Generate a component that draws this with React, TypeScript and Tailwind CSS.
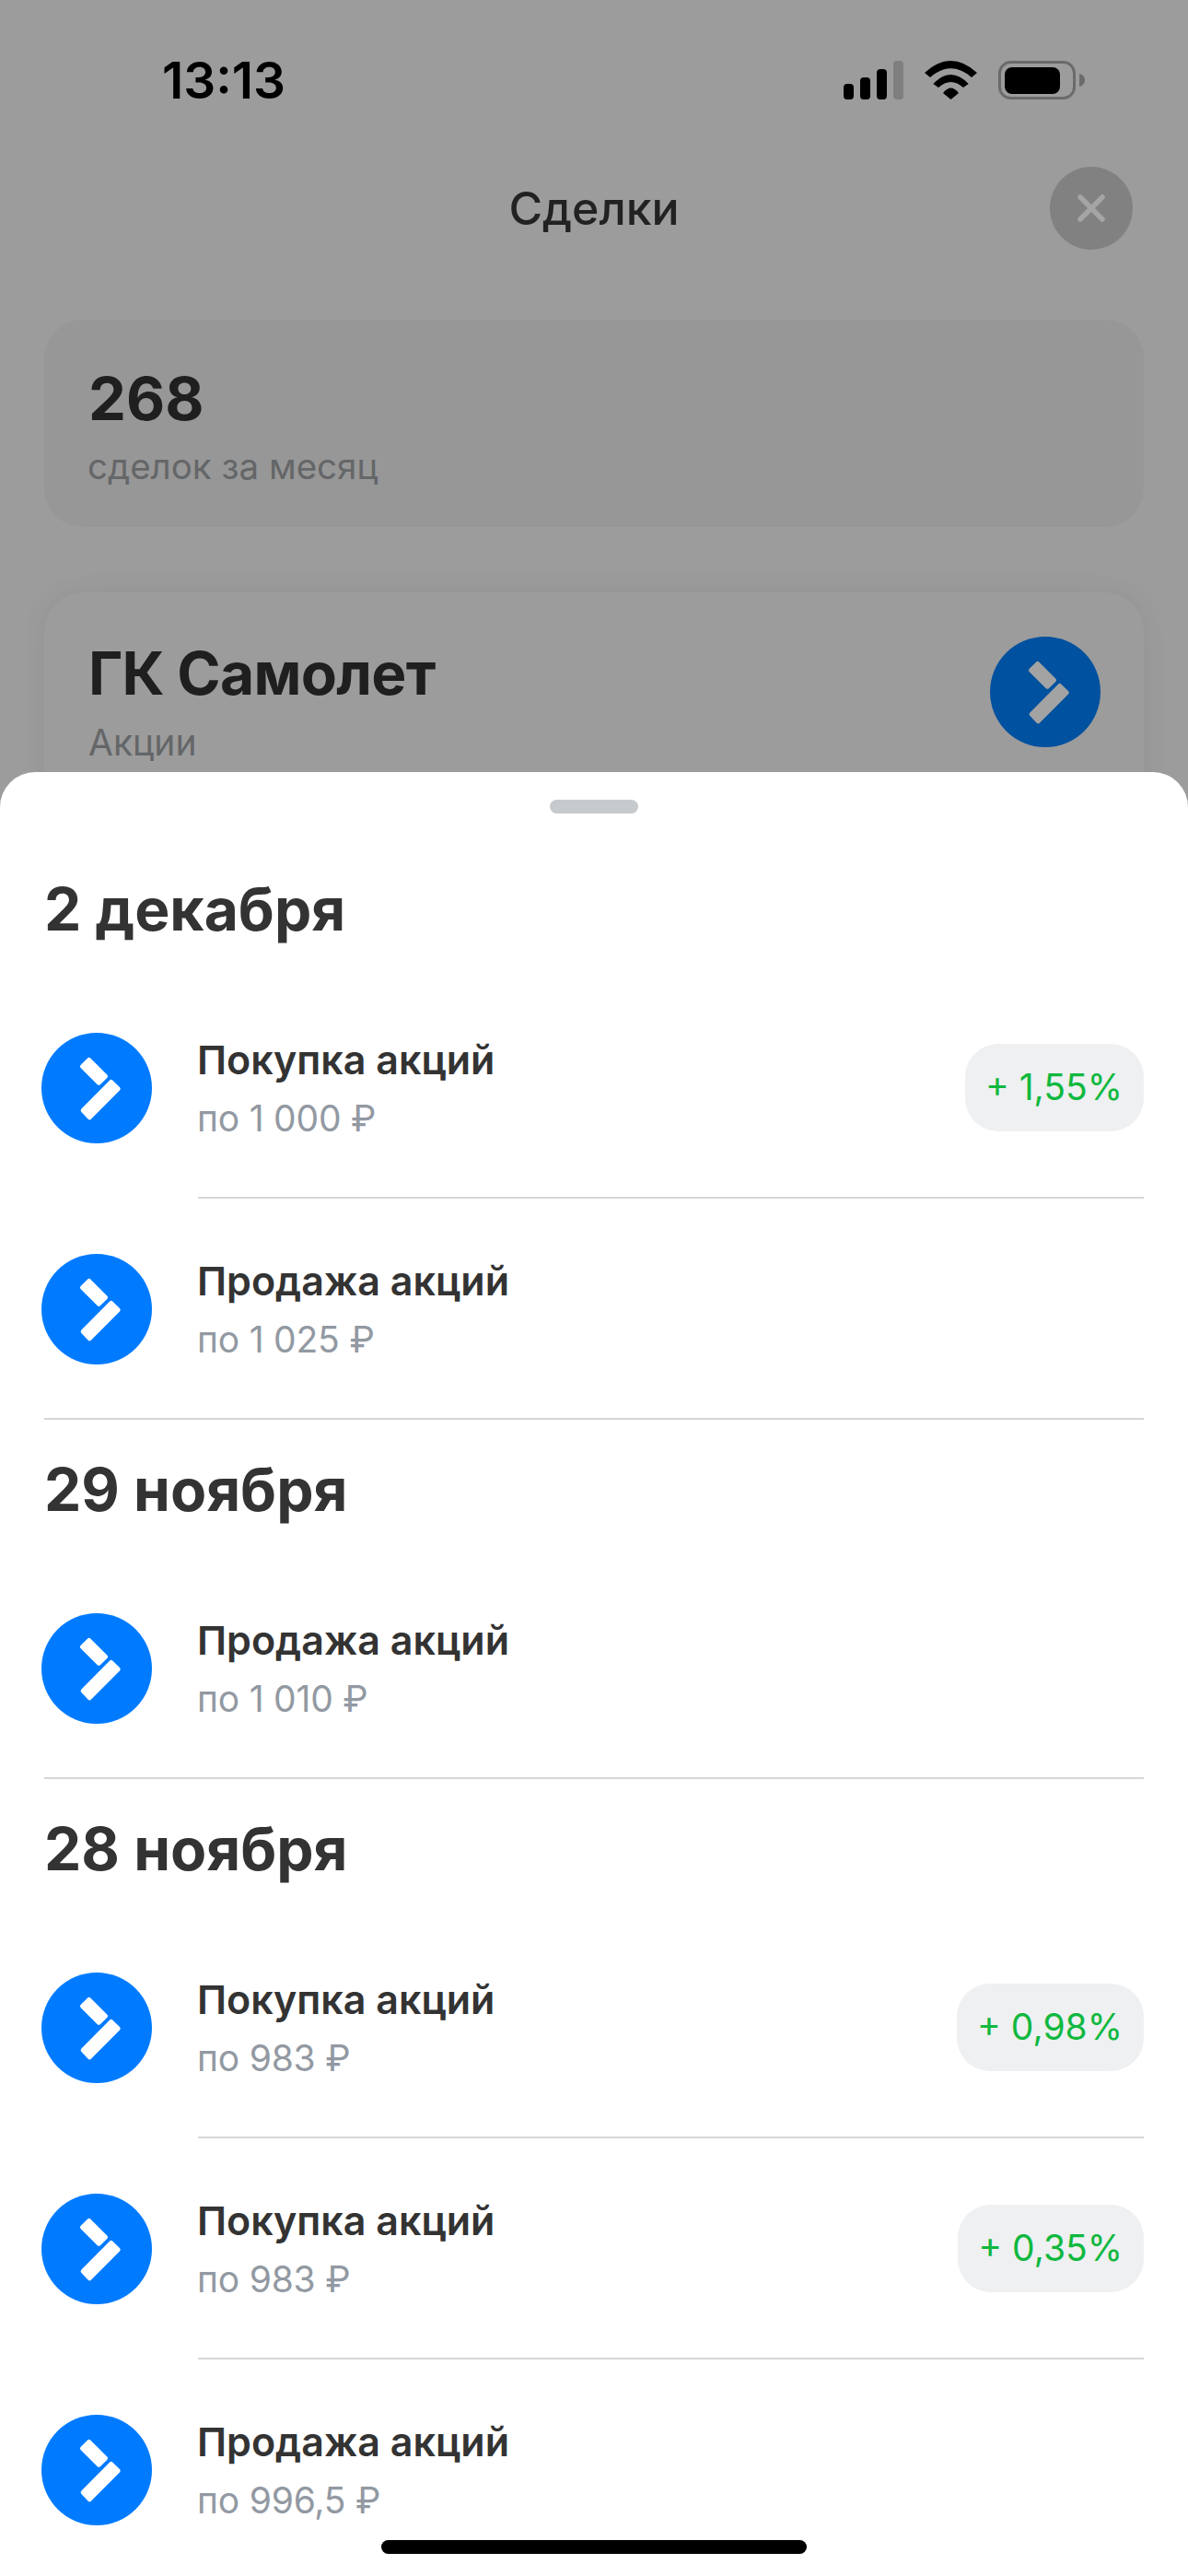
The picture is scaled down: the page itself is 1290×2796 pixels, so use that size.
const font = { fontFamily: "Inter, 'Noto Sans', sans-serif" }

type Deal = { title: string; price: string; badge?: string }
type Group = { date: string; deals: Deal[] }

const groups: Group[] = [
  {
    date: "2 декабря",
    deals: [
      { title: "Покупка акций", price: "по 1 000 ₽", badge: "+ 1,55%" },
      { title: "Продажа акций", price: "по 1 025 ₽" },
    ],
  },
  {
    date: "29 ноября",
    deals: [{ title: "Продажа акций", price: "по 1 010 ₽" }],
  },
  {
    date: "28 ноября",
    deals: [
      { title: "Покупка акций", price: "по 983 ₽", badge: "+ 0,98%" },
      { title: "Покупка акций", price: "по 983 ₽", badge: "+ 0,35%" },
      { title: "Продажа акций", price: "по 996,5 ₽" },
    ],
  },
]

function BrandIcon({ className, mark }: { className: string; mark: string }) {
  return (
    <div className={`h-[120px] w-[120px] shrink-0 rounded-full ${className}`}>
      <svg viewBox="0 0 120 120" className="h-full w-full">
        <g fill={mark} stroke={mark} strokeWidth="5" strokeLinejoin="round">
          <path d="M51.7 29.5 L44.5 36.5 L62.3 54.2 L69.5 47.2 Z" />
          <path d="M75.7 53.5 L83.2 60.8 L52.3 91.8 L45.2 84.2 Z" />
        </g>
      </svg>
    </div>
  )
}

function StatusIcons() {
  return (
    <svg viewBox="0 0 262 42" className="h-[42px] w-[262px]">
      <rect x="0" y="25" width="11" height="17" rx="4" fill="#000" />
      <rect x="18" y="18" width="11" height="24" rx="4" fill="#000" />
      <rect x="36" y="9" width="11" height="33" rx="4" fill="#000" />
      <rect x="54" y="0" width="11" height="42" rx="4" fill="#7f7f7f" />
      <path d="M88 13 Q116.5 -13 145 13 L139 18 Q116.5 -1.4 94 18 Z" fill="#000" />
      <path d="M97.3 25 Q116.5 5 135.7 25 L130 29 Q116.5 17 103 29 Z" fill="#000" />
      <path d="M108 35 Q116.5 24 125 35 L116.5 42 Z" fill="#000" />
      <rect x="169.5" y="1.5" width="81" height="39" rx="12" fill="none" stroke="#6b6b6b" strokeWidth="3" />
      <rect x="175" y="7" width="60" height="29" rx="8" fill="#000" />
      <path d="M256 14 C260 15 262 18 262 21 C262 24 260 27 256 28 Z" fill="#6b6b6b" />
    </svg>
  )
}

function DealRow({ deal, last }: { deal: Deal; last: boolean }) {
  return (
    <div className={`-ml-[3px] flex h-[240px] items-center ${last ? "-mb-[2px]" : ""}`}>
      <BrandIcon className="bg-[#007bff]" mark="#ffffff" />
      <div className={`ml-[50px] flex flex-1 items-center justify-between self-stretch border-b-2 ${last ? "border-transparent" : "border-[#d5d6d8]"}`}>
        <div className="-ml-[1px] pt-1">
          <div className="text-[43px] leading-[64px] font-semibold text-[#333333]">{deal.title}</div>
          <div className="text-[39px] leading-[64px] tracking-[-0.2px] text-[#9299a2]">{deal.price}</div>
        </div>
        {deal.badge && (
          <div className="flex h-[95px] items-center rounded-[36px] bg-[#eef0f2] pr-[23px] pl-[22px] text-[39px] text-[#0fb83e]">
            {deal.badge}
          </div>
        )}
      </div>
    </div>
  )
}

export default function App() {
  return (
    <div style={font} className="relative h-[2796px] w-[1290px] overflow-hidden bg-[#9c9c9c]">
      <div className="flex h-[174px] items-center justify-between pr-[112px] pl-[176px]">
        <span className="text-[55px] font-semibold text-black">13:13</span>
        <StatusIcons />
      </div>

      <div className="mt-[7px] grid h-[90px] grid-cols-[1fr_auto_1fr] items-center px-[60px]">
        <div />
        <div className="text-[50px] font-medium text-[#222222]">Сделки</div>
        <div className="flex h-[90px] w-[90px] items-center justify-center justify-self-end rounded-full bg-[#818181]">
          <svg viewBox="0 0 30 30" className="h-[30px] w-[30px]">
            <path d="M3 3 L27 27 M27 3 L3 27" stroke="#a5a5a5" strokeWidth="5.5" strokeLinecap="round" />
          </svg>
        </div>
      </div>

      <div className="mx-[48px] mt-[76px] h-[225px] rounded-[42px] bg-[#979797] pt-[44px] pl-[48px]">
        <div className="text-[65px] leading-[84px] font-bold text-[#1f1f1f]">268</div>
        <div className="mt-[6px] -ml-[1px] text-[38.5px] leading-[50px] text-[#646668]">сделок за месяц</div>
      </div>

      <div className="mx-[48px] mt-[71px] flex h-[300px] items-start justify-between rounded-[42px] bg-[#9c9c9c] pt-[48px] pr-[47px] pl-[48px] shadow-[0_0_30px_rgba(0,0,0,0.06)]">
        <div>
          <div className="text-[64px] leading-[80px] font-bold tracking-[-0.7px] text-[#1f1f1f]">ГК Самолет</div>
          <div className="mt-[10px] text-[39px] leading-[50px] text-[#646668]">Акции</div>
        </div>
        <BrandIcon className="bg-[#00519f]" mark="#a3a3a3" />
      </div>

      <div className="absolute inset-x-0 top-[838px] bottom-0 rounded-t-[38px] bg-white pt-[30px]">
        <div className="mx-auto h-[15px] w-[96px] rounded-full bg-[#c7cacd]" />
        <div className="mt-[28px] px-[48px]">
          {groups.map((group, i) => (
            <div key={group.date} className={i < groups.length - 1 ? "border-b-2 border-[#d5d6d8]" : ""}>
              <div className="flex h-[150px] items-center pt-[1px] text-[64px] font-bold text-[#333333]">
                {group.date}
              </div>
              {group.deals.map((deal, j) => (
                <DealRow key={j} deal={deal} last={j === group.deals.length - 1} />
              ))}
            </div>
          ))}
        </div>
      </div>

      <div className="absolute top-[2757px] left-[414px] h-[15px] w-[462px] rounded-full bg-black" />
    </div>
  )
}
